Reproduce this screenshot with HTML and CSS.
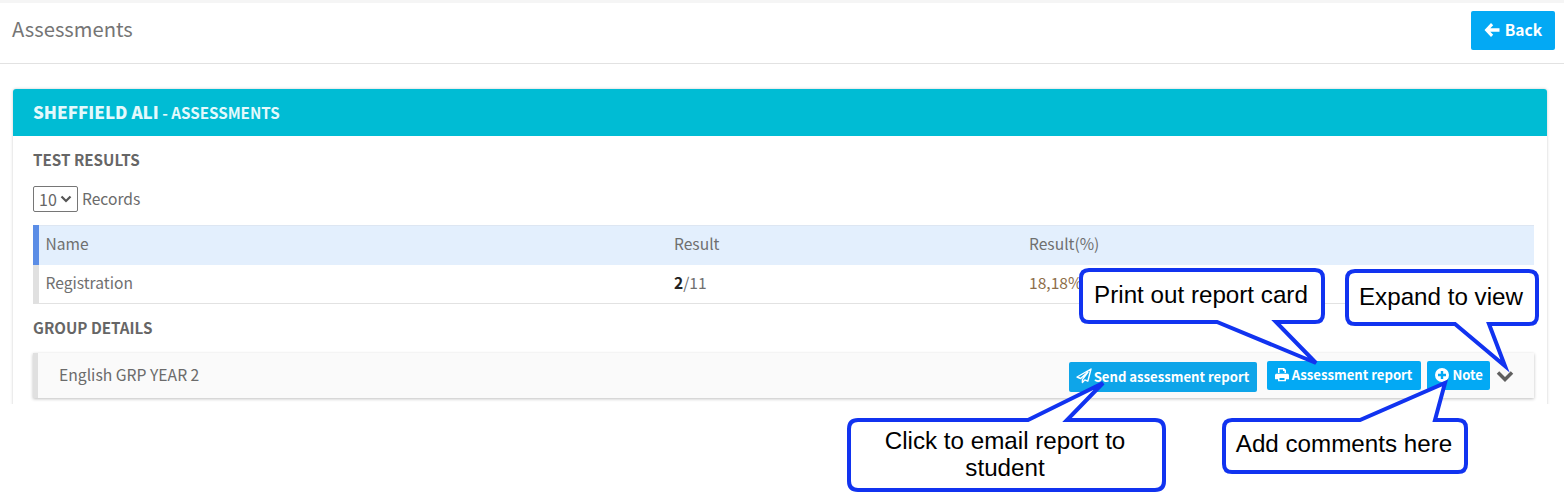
FILE: index.html
```html
<!DOCTYPE html>
<html lang="en">
<head>
	<meta charset="UTF-8">
	<title>Assessments</title>
	<link rel="stylesheet" href="styles.css">
</head>
<body>
	<div class="page">
		<div class="topbar">
			<h1 class="title">Assessments</h1>
			<a class="btn btn-back" href="#">
				<svg class="icon-back" viewBox="0 0 16 16"><path d="M7 1 .5 8 7 15l2.200-2.200-2.900-3H15.500V6.200H6.300l2.900-3z"/></svg>
				<span class="back-label">Back</span>
			</a>
		</div>
		<div class="content">
			<div class="card">
				<div class="card-head"><b>SHEFFIELD ALI</b> - ASSESSMENTS</div>
				<div class="card-body">
					<h2 class="section">TEST RESULTS</h2>
					<div class="records">
						<span class="select">10
							<svg class="select-arrow" viewBox="0 0 12 8"><path d="M1.500 1.500 6 6l4.500-4.500"/></svg>
						</span>
						<span class="records-label">Records</span>
					</div>
					<table class="results">
						<tr class="results-head">
							<th class="col-name">Name</th>
							<th class="col-result">Result</th>
							<th>Result(%)</th>
						</tr>
						<tr>
							<td>Registration</td>
							<td><b>2</b>/11</td>
							<td class="percent">18,18%</td>
						</tr>
					</table>
					<h2 class="section section-group">GROUP DETAILS</h2>
					<div class="group">
						<span class="group-name">English GRP YEAR 2</span>
						<div class="group-actions">
							<a class="btn btn-send" href="#">
								<svg class="icon" viewBox="0 0 16 16"><path class="outline" d="M15 1 1 9l3.600 1.500L12 4l-5.600 7.600v3l2.400-2.700 3 1.300z"/></svg>
								Send assessment report
							</a>
							<a class="btn btn-small" href="#">
								<svg class="icon" viewBox="0 0 16 16"><path d="M4 1h6l2 2v3h-1.500V4H9V2.500H5.500V6H4zM2.500 6.800h11c.8 0 1.500.7 1.500 1.500v4h-3v2H4v-2H1v-4c0-.8.7-1.500 1.500-1.500zM5.500 11v2h5v-2z"/></svg>
								Assessment report
							</a>
							<a class="btn btn-small btn-note" href="#">
								<svg class="icon" viewBox="0 0 16 16"><path fill-rule="evenodd" d="M8 1a7 7 0 1 1 0 14A7 7 0 0 1 8 1zM6.800 4v2.800H4v2.400h2.800V12h2.400V9.200H12V6.800H9.200V4z"/></svg>
								Note
							</a>
							<svg class="chevron" viewBox="0 0 18 12"><path d="M2 2.500 9 9.500l7-7"/></svg>
						</div>
					</div>
				</div>
			</div>
		</div>

		<!-- callouts drawn on top of the screenshot -->
		<svg class="callouts" width="1564" height="494" viewBox="0 0 1564 494">
			<path class="bubble" d="M1089 270H1315Q1323 270 1323 278V314Q1323 322 1315 322H1276L1316 363 1217 322H1089Q1081 322 1081 314V278Q1081 270 1089 270Z"/>
			<text class="bubble-text" x="1201" y="303">Print out report card</text>
			<path class="bubble" d="M1355 271H1529Q1537 271 1537 279V316Q1537 324 1529 324H1489L1505 366 1455 324H1355Q1347 324 1347 316V279Q1347 271 1355 271Z"/>
			<text class="bubble-text" x="1441" y="305">Expand to view</text>
			<path class="bubble" d="M1232 420H1360L1445 383 1435 420H1458Q1466 420 1466 428V464Q1466 472 1458 472H1232Q1224 472 1224 464V428Q1224 420 1232 420Z"/>
			<text class="bubble-text" x="1344" y="452">Add comments here</text>
			<path class="bubble" d="M858 420H1028L1103 383 1067 420H1155Q1164 420 1164 429V481Q1164 490 1155 490H858Q849 490 849 481V429Q849 420 858 420Z"/>
			<text class="bubble-text" x="1005" y="449">Click to email report to</text>
			<text class="bubble-text" x="1005" y="476">student</text>
		</svg>
	</div>
</body>
</html>
```

FILE: styles.css
```css
*{
	padding:0;
	margin:0;
	box-sizing:border-box;
}
body{
	background:#fff;
	font-family:"Noto Sans CJK SC","Noto Sans",sans-serif;
	color:#6b6b6b;
	font-size:15.6px;
}
.page{
	position:relative;
	width:1564px;
	height:494px;
	overflow:hidden;
}
.topbar{
	height:64px;
	border-top:3px solid #f5f5f5;
	border-bottom:1px solid #e2e2e2;
	padding:8px 9px 0 12px;
	display:flex;
	justify-content:space-between;
	align-items:flex-start;
}
.title{
	font-size:20.200px;
	font-weight:400;
	line-height:36px;
	color:#757575;
}
.btn{
	display:inline-flex;
	align-items:center;
	background:#03a9f4;
	color:#fff;
	text-decoration:none;
	font-weight:700;
	border-radius:2px;
	white-space:nowrap;
}
.btn-back{
	width:84px;
	height:39px;
	justify-content:center;
	gap:5px;
	font-size:15.600px;
	padding-bottom:1px;
}
.back-label{
	line-height:34px;
	padding-bottom:2px;
}
.icon-back{
	width:16px;
	height:16px;
	fill:#fff;
}
.content{
	height:340px;
	padding:25px 17px 0 13px;
	overflow:hidden;
}
.card{
	height:330px;
	border-radius:3px 3px 0 0;
	box-shadow:0 0 3px rgba(0,0,0,.22);
}
.card-head{
	height:47px;
	background:#00bcd4;
	color:#e4f9fc;
	padding-left:20px;
	line-height:46px;
	font-size:15.200px;
	font-weight:700;
	border-radius:3px 3px 0 0;
}
.card-head b{
	font-size:17px;
}
.card-body{
	padding:0 13px 0 20px;
}
.section{
	font-size:15.200px;
	font-weight:700;
	color:#666;
	line-height:20px;
	padding-top:13px;
	height:34px;
}
.records{
	display:flex;
	align-items:center;
	gap:4px;
	margin-top:16px;
	height:26px;
}
.records-label{
	padding-bottom:2px;
}
.select{
	display:flex;
	align-items:center;
	justify-content:space-between;
	width:45px;
	height:26px;
	border:1px solid #767676;
	border-radius:2px;
	padding:0 5px 1px;
	font-size:16px;
	color:#666;
}
.select-arrow{
	width:12px;
	height:8px;
	fill:none;
	stroke:#555;
	stroke-width:2.200;
}
.results{
	width:100%;
	margin-top:13px;
	border-collapse:separate;
	border-spacing:0;
	table-layout:fixed;
	border-left:6px solid #e0e0e0;
	border-bottom:1px solid #e2e2e2;
}
.results th,.results td{
	height:38px;
	padding:0 0 4px 6.500px;
	text-align:left;
	font-weight:400;
	color:#6f6f6f;
}
.results-head th{
	height:40px;
	padding-bottom:5px;
	background:#e3effd;
	border-top:1px solid #dde6f2;
}
.results-head .col-name{
	box-shadow:-6px 0 0 #5b8de6;
	width:635px;
}
.results-head .col-result{
	width:355px;
	padding-left:0;
}
.results td:nth-child(2),.results td:nth-child(3),.results th:nth-child(3){
	padding-left:0;
}
.results b{
	color:#222;
}
.percent{
	color:#8d6e4a !important;
}
.section-group{
	height:49px;
}
.group{
	height:45px;
	display:flex;
	justify-content:space-between;
	align-items:flex-start;
	background:#fafafa;
	border-left:5px solid #e0e0e0;
	box-shadow:0 1px 3px rgba(0,0,0,.25);
	padding-left:21px;
}
.group-name{
	line-height:43px;
	font-size:15.700px;
}
.group-actions{
	display:flex;
	align-items:flex-start;
	padding-top:8px;
	padding-right:20px;
}
.btn-send{
	height:30px;
	width:188px;
	margin-top:1px;
	margin-right:10px;
	padding:0 0 2px 7px;
	background:#0ea5e9;
	font-size:13.150px;
	gap:2px;
}
.btn-small{
	height:29px;
	padding:0 9px 2px 7px;
	margin-right:6px;
	font-size:13.150px;
	gap:2px;
}
.btn-note{
	padding-right:7px;
}
.icon{
	width:16px;
	height:16px;
	fill:#fff;
}
.icon .outline{
	fill:none;
	stroke:#fff;
	stroke-width:1.400;
	stroke-linejoin:round;
}
.chevron{
	width:18px;
	height:12px;
	margin-top:9px;
	fill:none;
	stroke:#5f5f5f;
	stroke-width:3.500;
}
.callouts{
	position:absolute;
	left:0;
	top:0;
}
.bubble{
	fill:#fff;
	stroke:#1133f0;
	stroke-width:4;
	stroke-linejoin:miter;
}
.bubble-text{
	font-family:"Liberation Sans",Arial,sans-serif;
	font-size:24.200px;
	fill:#000;
	text-anchor:middle;
}
```
